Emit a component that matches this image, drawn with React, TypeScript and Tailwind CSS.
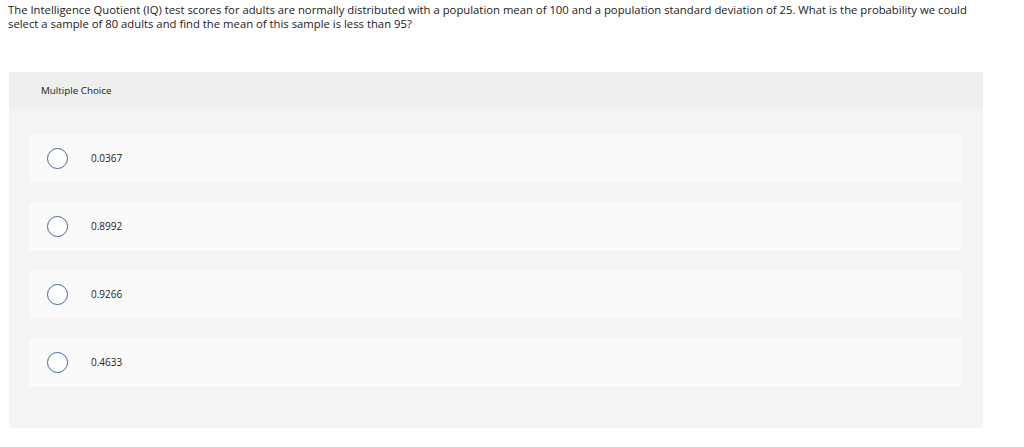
const choices = ["0.0367", "0.8992", "0.9266", "0.4633"];

export default function App() {
  return (
    <div className="min-h-[447px] bg-white text-[#222] font-['Open_Sans','Liberation_Sans',sans-serif]">
      <div className="w-[972px] pl-2 pt-[3px] text-[11.3px] leading-[13.5px] text-[#1a1a1a]">
        The Intelligence Quotient (IQ) test scores for adults are normally distributed with a population mean of 100 and a
        population standard deviation of 25. What is the probability we could select a sample of 80 adults and find the mean
        of this sample is less than 95?
      </div>

      <div className="ml-[9px] mt-[42px] w-[974px] rounded-[3px] bg-[#f4f4f4] pb-[41px]">
        <div className="flex h-[37px] items-center rounded-t-[3px] bg-[#efefef] pl-[32px] pt-[2px] text-[9.8px] text-[#222]">
          Multiple Choice
        </div>
        <div className="flex flex-col gap-[19px] px-[20px] pr-[21px] pt-[25px]">
          {choices.map((c) => (
            <div key={c} className="flex h-[49px] items-center rounded-[3px] bg-[#fafafa] pl-[18px]">
              <span className="h-[21px] w-[21px] rounded-full border border-[#3f6797] bg-white" />
              <span className="ml-[23px] text-[10px] text-[#222]">{c}</span>
            </div>
          ))}
        </div>
      </div>
    </div>
  );
}
